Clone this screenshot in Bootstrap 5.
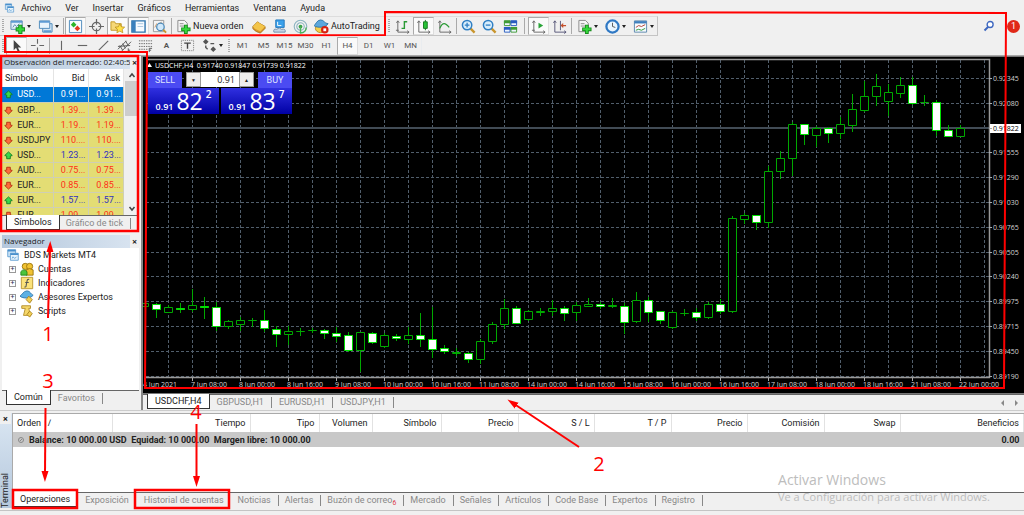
<!DOCTYPE html>
<html lang="es">
<head>
<meta charset="utf-8">
<meta name="viewport" content="width=device-width, initial-scale=1">
<title>BDS Markets MT4</title>
<link href="https://cdn.jsdelivr.net/npm/bootstrap@5.3.0/dist/css/bootstrap.min.css" rel="stylesheet">
<style>
body{font-family:Roboto,"Open Sans",sans-serif;font-size:9px;line-height:12px;background:#f0f0f0;color:#222;min-height:100vh}
button,input{font:inherit;color:inherit}
.tb,.tf,.tab,.closer{border:1px solid transparent;background:none;padding:0}
.menubar{height:16px;padding-left:4px;gap:14px}
.menubar a{color:#222;text-decoration:none}
.menubar svg{margin-right:-8px}
.bar1{height:20px}
.bar2{height:19px;color:#555}
.bars{border-bottom:1px solid #a8a8a8}
.strip{border:1px solid #c4c4c4;border-left:0;border-top-color:#ddd}
.tb{width:21px;height:18px;display:flex;align-items:center;justify-content:center;flex:none}
.tb svg{width:15px;height:15px;flex:none}
.tb.dd{width:28px;gap:2px}
.tb.wide{width:75px;gap:2px;padding:0 2px;justify-content:flex-start;white-space:nowrap}
.tf{width:21px;height:18px;font-size:8px;flex:none}
.on{background:#fafafa;border-color:#aaa #ddd #ddd #aaa}
.caret{border:2px solid transparent;border-top:3px solid #222;border-bottom:0}
.grip{width:2px;height:14px;margin:0 2px;background:repeating-linear-gradient(#aaa 0 1px,transparent 1px 2px);flex:none}
.vr1{width:1px;height:16px;margin:0 1px;background:#aaa;flex:none}
.vr1.loose{margin:0 3px}
.side{width:141px;flex:none;padding:0 2px}
.ptitle{height:13px;background:linear-gradient(90deg,#b4c7dc,#dae5f1);white-space:nowrap;padding-left:2px;font-family:"Open Sans",sans-serif;font-size:8px}
.ptitle span{overflow:hidden;flex:1}
.closer{width:9px;font-size:9px;line-height:10px;font-weight:700;background:#f0f0f0;flex:none}
.market{height:146px;overflow:hidden;background:#fff}
.quotes{table-layout:fixed;width:122px;border-collapse:collapse;flex:none}
.quotes th{height:18px;font-weight:400;padding:0 3px;border-right:1px solid #e4e4e4}
.quotes td{height:15px;padding:0 2px;background:#e3dd74;border:1px solid #cfcfb4;border-left:0;border-top:0;white-space:nowrap;line-height:12px}
.quotes .sel td{background:#0078d7;color:#fff}
.dn{color:#ff3018}.up{color:#3030c0}
.quotes svg{width:9px;height:9px;margin-right:2px}
.scroll{background:#f0f0f0;flex:1}
.scroll i{display:block;height:35px;background:#cdcdcd;margin:0 1px}
.scroll svg{width:8px;height:12px}
.tabs{height:16px;border-top:1px solid #666;white-space:nowrap}
.tab{height:11px;line-height:11px;color:#888;border:0;border-right:1px solid #888;padding:0 7px}
.tab.cur{height:15px;margin-top:-1px;background:#fff;color:#222;border:1px solid #333;border-top:0}
.tab.nob{border-right-color:transparent}
.tight .tab:not(.cur,.nob){padding-left:6px}
.tree{background:#fff;height:142px}
.tree div{height:14px;display:flex;align-items:center}
.tree svg{width:14px;height:14px;flex:none}
.leaf{padding-left:7px;gap:4px}
.leaf::before{content:"+";width:7px;height:7px;border:1px solid #999;font-size:7px;line-height:5px;text-align:center;color:#335}
.work{flex:1;min-width:0;border-left:2px solid #888}
.stage{background:#000;height:338px;border-top:1px solid #777;border-bottom:1px solid #777;overflow:hidden;font-family:"Open Sans",sans-serif}
.plot{width:100%;height:100%;display:block}
.plot text{font-size:7px;fill:#d4d4d4}
.trade{position:absolute;left:5px;top:15px;width:144px;color:#dfe2ff}
.side-name{width:34px;height:16px;background:#4b4bf2;border:0;line-height:14px;padding:0;color:#dfe2ff;font-family:Roboto,sans-serif}
.quote{flex:1;height:26px;background:linear-gradient(#3030e0,#0000a4);border:0;padding:0;display:flex;align-items:flex-end;justify-content:center;gap:3px;color:#fff;line-height:12px}
.quote b{font-size:23px;line-height:25px;font-weight:400}
.quote sup{font-size:10px;top:0;align-self:flex-start;line-height:12px;font-weight:600}
.quote span{padding-bottom:1px;font-weight:600}
.lot{height:15px;background:#fff;color:#222;flex:1;min-width:0}
.lot input{flex:1;min-width:0;border:0;padding:0 4px 0 0;text-align:right;background:#fff}
.lot button{width:15px;border:1px solid #999;background:#eee;font-size:5px;line-height:10px;padding:0}
.term{border-top:1px solid #ccc;background:#f0f0f0;padding-top:2px}
.rail{width:12px;flex:none;background:linear-gradient(#dbe7f3,#b4c7dc)}
.rail span{writing-mode:vertical-rl;transform:rotate(180deg);line-height:11px}
.rail .closer{width:11px;height:11px}
.ledger{background:#fff;height:79px;border-top:1px solid #aaa;border-left:1px solid #aaa}
.orders{table-layout:fixed;width:100%;border-collapse:collapse}
.orders th{height:18px;font-weight:400;text-align:right;padding:0 4px;border-right:1px solid #e2e2e2}
.orders td{height:15px;background:#c8c8c8;font-weight:700;padding:0 4px}
.status{height:5px;border-top:1px solid #c4c4c4;margin-top:2px}
.water{position:absolute;right:34px;bottom:11px;color:#bdbdbd;font:11px/14px "Open Sans",sans-serif;pointer-events:none}
.water div:first-child{font-size:14px;line-height:20px}
.notes{position:absolute;left:0;top:0;width:100%;height:100%;pointer-events:none}
.notes text{font:20px "Open Sans",sans-serif;fill:#f00}
.alertdot{width:13px;height:13px;background:#e02818;color:#fff;line-height:13px;text-align:center;border-radius:50%;margin-right:4px}
</style>
</head>
<body class="d-flex flex-column position-relative overflow-hidden">
<svg width="0" height="0" class="position-absolute" aria-hidden="true">
<defs>
<symbol id="i-app" viewBox="0 0 16 16"><path d="M2 2h9v8H2z" fill="#cfe6f8" stroke="#5b9bd0"/><path d="M2 3h9" stroke="#4a90cc" stroke-width="2"/><path d="M5 6h9v8H5z" fill="#e6f3fc" stroke="#5b9bd0"/><path d="M5 7h9" stroke="#4a90cc" stroke-width="2"/><path d="M7 12l1-2 2 2 2-2" fill="none" stroke="#5b9bd0"/></symbol>
<symbol id="i-plus" viewBox="0 0 16 16"><path d="M1 2h12v9H1z" fill="#e4f0fa" stroke="#5b87ad"/><path d="M1 3h12" stroke="#5d9bd3" stroke-width="2"/><path d="M3 9l2-3 2 2 3-3" stroke="#5b87ad" fill="none"/><path d="M11 6v10M6 11h10" stroke="#178a1c" stroke-width="4.500"/><path d="M11 7v8M7 11h8" stroke="#35d83c" stroke-width="2.500"/></symbol>
<symbol id="i-wins" viewBox="0 0 16 16"><path d="M5 5h10v9H5z" fill="#d2e6f5" stroke="#4d8abb"/><path d="M1.500 2h11v8h-11z" fill="#e8f4fc" stroke="#4d8abb"/><path d="M2 3h10M6 13h8" stroke="#5d9bd3" stroke-width="2"/></symbol>
<symbol id="i-mkt" viewBox="0 0 16 16"><path d="M1.500 1.500h13v13h-13z" fill="#f8fcff" stroke="#4d8abb"/><path d="M3 6l3-3 3 3-3 3z" fill="#2bb52b"/><path d="M7 10l3-3 3 3-3 3z" fill="#e23b22"/></symbol>
<symbol id="i-cross" viewBox="0 0 16 16"><g fill="none" stroke="#666" stroke-width="1.300"><circle cx="8" cy="8" r="4.500"/><path d="M8 0v6M8 10v6M0 8h6M10 8h6"/></g></symbol>
<symbol id="i-fav" viewBox="0 0 16 16"><path d="M1 3h4l1 2h6v7H1z" fill="#f6d878" stroke="#c29a2a"/><path d="M10.500 5l1.600 3.300 3.500.4-2.600 2.400.7 3.600-3.200-1.800-3.200 1.800.7-3.600L5.400 8.700l3.500-.4z" fill="#ffe04a" stroke="#b88d18" stroke-width=".8"/></symbol>
<symbol id="i-term" viewBox="0 0 16 16"><path d="M1 2h14v12H1z" fill="#f6fbff" stroke="#2d74ae" stroke-width="1.500"/><path d="M1 2h4v12H1z" fill="#3a80bd"/><path d="M7 5h6M7 8h6" stroke="#a8c6e0"/></symbol>
<symbol id="i-test" viewBox="0 0 16 16"><path d="M1.500 1.500h11v12h-11z" fill="#f4f4f4" stroke="#999"/><path d="M3 9l2-4 2 3 3-5" stroke="#c96" fill="none"/><circle cx="9" cy="8.500" r="4" fill="#cfe8fa" stroke="#4a88b8" stroke-width="1.300"/><path d="M12 11.500l3 3" stroke="#c9952d" stroke-width="2"/></symbol>
<symbol id="i-order" viewBox="0 0 16 16"><path d="M2 1.500h7l3 3v9H2z" fill="#f6f6f6" stroke="#888"/><path d="M4 5h4M4 7.500h5" stroke="#888"/><path d="M10.500 6v10M5.500 11h10" stroke="#178a1c" stroke-width="4"/><path d="M10.500 7v8M6.500 11h8" stroke="#35d83c" stroke-width="2.200"/></symbol>
<symbol id="i-gold" viewBox="0 0 16 16"><path d="M2 8l5-5c2 2 5 3 8 5v2l-5 5c-3-1-6-2-8-5z" fill="#d9982a" stroke="#a8731a"/><path d="M2 8l5-5c2 2 5 3 8 5l-5 5c-3-1-6-2-8-5z" fill="#f3c54a"/></symbol>
<symbol id="i-blue" viewBox="0 0 16 16"><path d="M4 1h9v8H4z" fill="#3aa0ea" stroke="#2378bd"/><path d="M6 3v4h4" stroke="#fff" fill="none"/><path d="M2 14q-1-4 3-3 3-3 5 0 5-1 4 3z" fill="#c5d4e4" stroke="#7390ad"/></symbol>
<symbol id="i-sig" viewBox="0 0 16 16"><g fill="none" stroke="#8cb4c0" stroke-width="1.200"><circle cx="8" cy="8" r="6.700"/><circle cx="8" cy="8" r="4"/></g><circle cx="8" cy="8" r="2" fill="#38a148"/><path d="M8 8v7c4 0 6-3 6-6" stroke="#4bb35a" stroke-width="1.500" fill="none"/></symbol>
<symbol id="i-auto" viewBox="0 0 16 16"><ellipse cx="7" cy="10" rx="5.500" ry="4.500" fill="#f3cf4b" stroke="#b78c22"/><path d="M0 7c2-1 3-6 7-6s4 4 8 4c-2 4-12 5-15 2z" fill="#5ca7dd" stroke="#2a75aa"/><circle cx="11.500" cy="11.500" r="4" fill="#d9200f"/><path d="M10 10h3v3h-3z" fill="#fff"/></symbol>
<symbol id="i-bars" viewBox="0 0 16 16"><path d="M3 2v12h12M1 12h3M3 2l-1.500 2M3 2l1.500 2M13 12.500l2 1.500-2 1.500" fill="none" stroke="#666"/><path d="M7 10h3V3h3" fill="none" stroke="#2a9a35" stroke-width="1.500"/></symbol>
<symbol id="i-cndl" viewBox="0 0 16 16"><path d="M3 2v12h12M3 2l-1.500 2M3 2l1.500 2M13 12.500l2 1.500-2 1.500" fill="none" stroke="#666"/><path d="M10 1v11" stroke="#187a20"/><path d="M8 3h4v7H8z" fill="#28c437" stroke="#187a20"/></symbol>
<symbol id="i-line" viewBox="0 0 16 16"><path d="M3 2v12h12M3 2l-1.500 2M3 2l1.500 2M13 12.500l2 1.500-2 1.500" fill="none" stroke="#666"/><path d="M3 10c3-7 6-6 10-1" fill="none" stroke="#2a9a35" stroke-width="1.300"/></symbol>
<symbol id="i-zin" viewBox="0 0 16 16"><path d="M9.500 9.500l5 5" stroke="#c9952d" stroke-width="2.500"/><circle cx="6.500" cy="6.500" r="5" fill="#d8eefc" stroke="#2f7fc4" stroke-width="1.600"/><path d="M4 6.500h5M6.500 4v5" stroke="#2f7fc4" stroke-width="1.400"/></symbol>
<symbol id="i-zout" viewBox="0 0 16 16"><path d="M9.500 9.500l5 5" stroke="#c9952d" stroke-width="2.500"/><circle cx="6.500" cy="6.500" r="5" fill="#d8eefc" stroke="#2f7fc4" stroke-width="1.600"/><path d="M4 6.500h5" stroke="#2f7fc4" stroke-width="1.400"/></symbol>
<symbol id="i-tile" viewBox="0 0 16 16"><g fill="#eef6ff"><path d="M1.500 2h6v5h-6z" stroke="#3f9a35"/><path d="M8.500 2h6v5h-6z" stroke="#2a5cc0"/><path d="M1.500 9h6v5h-6z" stroke="#2a5cc0"/><path d="M8.500 9h6v5h-6z" stroke="#3f9a35"/></g><path d="M1 3h7M8 10h7" stroke="#3f9a35" stroke-width="3"/><path d="M8 3h7M1 10h7" stroke="#2a5cc0" stroke-width="3"/></symbol>
<symbol id="i-scr" viewBox="0 0 16 16"><path d="M3 2v12h12M1 12h3M3 2l-1.500 2M3 2l1.500 2M13 12.500l2 1.500-2 1.500" fill="none" stroke="#666"/><path d="M8 4l5 3-5 3z" fill="#28a437"/></symbol>
<symbol id="i-shift" viewBox="0 0 16 16"><path d="M3 2v12h12M3 2l-1.500 2M3 2l1.500 2M13 12.500l2 1.500-2 1.500M9 2v10" fill="none" stroke="#557"/><path d="M15 7h-5M12 5l-2 2 2 2" stroke="#c4502c" fill="none" stroke-width="1.300"/></symbol>
<symbol id="i-clock" viewBox="0 0 16 16"><circle cx="8" cy="8" r="6.500" fill="#e9f5ff" stroke="#2f78c4" stroke-width="2.400"/><path d="M8 4v4l3 1" fill="none" stroke="#555"/></symbol>
<symbol id="i-tmpl" viewBox="0 0 16 16"><path d="M1.500 2h13v12h-13z" fill="#f8fbff" stroke="#5b87ad"/><path d="M1.500 3.500h13" stroke="#3f7fbd" stroke-width="2.500"/><path d="M3 9l3-2 3 1 4-2" stroke="#b04030" fill="none"/><path d="M3 12l3-1 3 1 4-2" stroke="#2a9a35" fill="none"/></symbol>
<symbol id="i-arrow" viewBox="0 0 16 16"><path d="M5 2v11l2.500-2.500 2 4.500 2-1-2-4H13z" fill="#444"/></symbol>
<symbol id="i-ch" viewBox="0 0 16 16"><path d="M8 1v5M8 10v5M1 8h5M10 8h5" stroke="#666" stroke-width="1.200"/></symbol>
<symbol id="i-v" viewBox="0 0 16 16"><path d="M8 3v10" stroke="#666" stroke-width="1.200"/></symbol>
<symbol id="i-h" viewBox="0 0 16 16"><path d="M3 8h10" stroke="#666" stroke-width="1.200"/></symbol>
<symbol id="i-d" viewBox="0 0 16 16"><path d="M3 13L13 3" stroke="#666" stroke-width="1.200"/></symbol>
<symbol id="i-chan" viewBox="0 0 16 16"><path d="M1 12l9-9M5 14l10-10M3 8l3 5M6 6l3 5M9 3l3 5M1 9l13-1" stroke="#555" fill="none"/><path d="M12 11v4h3M12 13h2" stroke="#555" fill="none"/></symbol>
<symbol id="i-fib" viewBox="0 0 16 16"><path d="M1 3h14M1 6h14M1 9h14M1 12h9" stroke="#666" stroke-dasharray="1.500 1"/><path d="M12 15v-4h3M12 13h2" stroke="#555" fill="none"/></symbol>
<symbol id="i-lab" viewBox="0 0 16 16"><path d="M1.500 2.500h13v11h-13z" fill="none" stroke="#777" stroke-dasharray="1 1"/><path d="M4.500 5.500h7M8 5.500v6" stroke="#444" stroke-width="1.500"/></symbol>
<symbol id="i-shapes" viewBox="0 0 16 16"><path d="M4 1l3 3-3 3-3-3zM12 9l3 3-3 3-3-3z" fill="#555"/><path d="M4 8v2l2 2M9 6h4" stroke="#555" stroke-width="1.500" fill="none"/></symbol>
<symbol id="i-up" viewBox="0 0 10 10"><path d="M5 1L9.200 5 7 5.600V8.600H3V5.600L.8 5z" fill="#38d84a" stroke="#137a22"/></symbol>
<symbol id="i-dn" viewBox="0 0 10 10"><path d="M5 9L.8 5 3 4.400V1.400H7V4.400L9.200 5z" fill="#ff6a38" stroke="#b02c10"/></symbol>
<symbol id="i-acc" viewBox="0 0 16 16"><circle cx="6" cy="5" r="3.500" fill="#f1c232" stroke="#98720a"/><circle cx="11" cy="5" r="3.500" fill="#f1c232" stroke="#98720a"/><path d="M7 15V9q4-3 8 0v6z" fill="#f1c232" stroke="#98720a"/><path d="M1 15v-4q3-4 7 0v4z" fill="#4cc43c" stroke="#24861a"/></symbol>
<symbol id="i-ind" viewBox="0 0 16 16"><path d="M1.500 1.500h13v13h-13z" fill="#fbe27a" stroke="#b8922a"/><path d="M10.500 4q-2-1-2.500 2L7 11q0 2-2 1.500M6 7.500h4" fill="none" stroke="#555" stroke-width="1.200"/></symbol>
<symbol id="i-exp" viewBox="0 0 16 16"><path d="M0 7c2-1 4-6 8-6s4 4 7 5c-3 4-12 4-15 1z" fill="#5cb0e4" stroke="#2a75aa"/><path d="M10 7l4 4-3 4-4-4z" fill="#f1cf56" stroke="#a8801c"/></symbol>
<symbol id="i-scp" viewBox="0 0 16 16"><path d="M2 2h10v3h-2l2 8H4L6 5H2z" fill="#f5d76a" stroke="#b08a26"/><path d="M11 8l3 3-3 4-3-3z" fill="#f1cf56" stroke="#a8801c"/></symbol>
</defs></svg>

<nav class="menubar d-flex align-items-center" aria-label="Menú">
<svg width="11" height="12" aria-hidden="true"><use href="#i-app"/></svg>
<a href="#">Archivo</a><a href="#">Ver</a><a href="#">Insertar</a><a href="#">Gráficos</a><a href="#">Herramientas</a><a href="#">Ventana</a><a href="#">Ayuda</a>
</nav>

<header class="bars">
<div class="bar1 d-flex align-items-center">
<div class="strip d-flex align-items-center" id="bar1"></div>
<div class="ms-auto d-flex align-items-center gap-2">
<svg width="12" height="12" viewBox="0 0 16 16" aria-label="Buscar"><path d="M7 9l-5 5" stroke="#3d67c0" stroke-width="2.500"/><circle cx="9.500" cy="6" r="4" fill="#fff" stroke="#3d67c0" stroke-width="1.800"/></svg>
<span class="alertdot ms-1">1</span></div>
</div>
<div class="bar2 d-flex align-items-center"><div class="d-flex align-items-center border-end border-secondary-subtle" id="bar2"></div></div>
</header>

<main class="d-flex">
<aside class="side">
<section>
<div class="ptitle d-flex"><span>Observación del mercado: 02:40:5</span><button class="closer" aria-label="Cerrar">×</button></div>
<div class="market d-flex">
<table class="quotes"><colgroup><col style="width:51px"><col style="width:35px"><col></colgroup>
<thead><tr><th>Símbolo</th><th class="text-end">Bid</th><th class="text-end">Ask</th></tr></thead><tbody id="quotes"></tbody></table>
<div class="scroll d-flex flex-column" aria-hidden="true"><svg class="mx-auto" viewBox="0 0 8 12"><path d="M1.500 8L4 5l2.500 3" fill="none" stroke="#444" stroke-width="1.500"/></svg><i></i><svg class="mx-auto mt-auto" viewBox="0 0 8 12"><path d="M1.500 4L4 7l2.500-3" fill="none" stroke="#444" stroke-width="1.500"/></svg></div>
</div>
<div class="tabs tight d-flex align-items-center ps-1"><button class="tab cur align-self-start">Símbolos</button><button class="tab">Gráfico de tick</button></div>
</section>
<section class="pt-1">
<div class="ptitle d-flex"><span>Navegador</span><button class="closer" aria-label="Cerrar">×</button></div>
<div class="tree">
<div class="ps-1 gap-1"><svg><use href="#i-app"/></svg>BDS Markets MT4</div>
<div class="leaf"><svg><use href="#i-acc"/></svg>Cuentas</div>
<div class="leaf"><svg><use href="#i-ind"/></svg>Indicadores</div>
<div class="leaf"><svg><use href="#i-exp"/></svg>Asesores Expertos</div>
<div class="leaf"><svg><use href="#i-scp"/></svg>Scripts</div>
</div>
<div class="tabs d-flex align-items-center ps-1"><button class="tab cur align-self-start">Común</button><button class="tab">Favoritos</button></div>
</section>
</aside>

<section class="work">
<div class="stage position-relative">
<svg class="plot" id="plot" viewBox="143 57 881 336" preserveAspectRatio="xMinYMin meet" role="img" aria-label="USDCHF,H4"></svg>
<div class="trade">
<div class="d-flex gap-1 justify-content-between"><button class="side-name">SELL</button>
<div class="lot d-flex"><button aria-label="Menos">▼</button><input aria-label="Volumen" value="0.91"><button aria-label="Más">▲</button></div>
<button class="side-name">BUY</button></div>
<div class="d-flex" style="gap:2px"><button class="quote"><span>0.91</span><b>82</b><sup>2</sup></button><button class="quote"><span>0.91</span><b>83</b><sup>7</sup></button></div>
</div>
</div>
<div class="tabs d-flex align-items-center ps-1"><button class="tab cur align-self-start">USDCHF,H4</button><button class="tab">GBPUSD,H1</button><button class="tab">EURUSD,H1</button><button class="tab">USDJPY,H1</button>
<svg class="ms-auto me-1" width="20" height="8" aria-hidden="true"><path d="M4 1v6L1 4zM15 1v6l3-3z" fill="#888"/></svg></div>
</section>
</main>

<footer class="term">
<div class="d-flex">
<div class="rail d-flex flex-column justify-content-between"><button class="closer" aria-label="Cerrar">×</button><span>Terminal</span></div>
<div class="flex-grow-1">
<div class="ledger"><table class="orders">
<colgroup><col style="width:99px"><col style="width:138px"><col style="width:69px"><col style="width:53px"><col style="width:69px"><col style="width:77px"><col style="width:76px"><col style="width:77px"><col style="width:76px"><col style="width:77px"><col style="width:76px"><col></colgroup>
<thead><tr><th class="text-start">Orden &nbsp; ∕</th><th>Tiempo</th><th>Tipo</th><th>Volumen</th><th>Símbolo</th><th>Precio</th><th>S / L</th><th>T / P</th><th>Precio</th><th>Comisión</th><th>Swap</th><th>Beneficios</th></tr></thead>
<tbody><tr><td colspan="11"><svg width="8" height="8" viewBox="0 0 8 8" class="me-1" aria-hidden="true"><circle cx="4" cy="4" r="2.500" fill="none" stroke="#888"/><path d="M3 5l2-2" stroke="#888"/></svg>Balance: 10 000.00 USD&nbsp; Equidad: 10 000.00&nbsp; Margen libre: 10 000.00</td><td class="text-end">0.00</td></tr></tbody></table></div>
<div class="tabs tight d-flex align-items-center"><button class="tab cur align-self-start">Operaciones</button><button class="tab nob">Exposición</button><button class="tab nob">Historial de cuentas</button><button class="tab">Noticias</button><button class="tab">Alertas</button><button class="tab">Buzón de correo<sub class="text-danger">6</sub></button><button class="tab">Mercado</button><button class="tab">Señales</button><button class="tab">Artículos</button><button class="tab">Code Base</button><button class="tab">Expertos</button><button class="tab">Registro</button></div>
</div>
</div>
<div class="status"></div>
</footer>

<div class="water"><div>Activar Windows</div><div>Ve a Configuración para activar Windows.</div></div>

<svg class="notes" viewBox="0 0 1024 515" preserveAspectRatio="xMinYMin meet">
<defs><marker id="tip" markerUnits="userSpaceOnUse" markerWidth="12" markerHeight="8" refX="2" refY="4" orient="auto"><path d="M0 .5L11 4 0 7.500z" fill="#f00"/></marker></defs>
<g fill="none" stroke="#f00" stroke-width="2">
<path d="M1 56h137v175H1zM13 490h64v18H13zM135 490h94v18h-94z" stroke-width="2.500"/>
<path d="M5 36L385 35V12L1006 13L1004 388H145L147 52H5z"/>
<path d="M48 318L50 250" marker-end="url(#tip)"/><path d="M579 447L515 404.500" marker-end="url(#tip)"/><path d="M45.500 408L45 473" marker-end="url(#tip)"/><path d="M196.500 424V478" marker-end="url(#tip)"/>
</g>
<g text-anchor="middle"><text x="48" y="341">1</text><text x="599" y="471">2</text><text x="48" y="388">3</text><text x="196" y="419">4</text></g>
</svg>

<script>
// Toolbars: [icon, label, flags] where flags are d (drop-down), o (pressed), w (with text)
const bar = (id, items) => document.getElementById(id).innerHTML = items.map(i => {
  if (i === 'g') return '<span class="grip"></span>';
  if (i === '|') return '<span class="vr1"></span>';
  if (i === '||') return '<span class="vr1 loose"></span>';
  const [icon, label, f = ''] = i;
  const on = f.includes('o') ? ' on' : '';
  if (!icon) return `<button class="tf${on}">${label}</button>`;
  return `<button class="tb${on}${f.includes('d') ? ' dd' : ''}${f.includes('w') ? ' wide' : ''}" aria-label="${label}"><svg><use href="#i-${icon}"/></svg>${f.includes('w') ? label : ''}${f.includes('d') ? '<span class="caret"></span>' : ''}</button>`;
}).join('');
bar('bar1', ['g',['plus','Nuevo gráfico','d'],['wins','Perfiles','d'],'|',['mkt','Mercado','o'],['cross','Datos'],['fav','Navegador','o'],['term','Terminal','o'],['test','Probador'],'|',
 ['order','Nueva orden','w'],['gold','MetaEditor'],['blue','VPS'],['sig','Señales'],['auto','AutoTrading','w'],'g',['bars','Barras'],['cndl','Velas','o'],['line','Línea'],'|',
 ['zin','Acercar'],['zout','Alejar'],['tile','Mosaico'],'||',['scr','Desplazar','o'],['shift','Margen'],'|',['order','Indicadores','d'],['clock','Períodos','d'],['tmpl','Plantillas','d']]);
bar('bar2', ['g',['arrow','Cursor','o'],['ch','Cruz'],'|',['v','Vertical'],['h','Horizontal'],['d','Tendencia'],['chan','Canal'],['fib','Fibonacci'],['','<b>A</b>'],['lab','Etiqueta'],['shapes','Flechas','d'],'g',
 ...['M1','M5','M15','M30','H1','H4','D1','W1','MN'].map(t => ['', t, t === 'H4' ? 'o' : ''])]);

document.getElementById('quotes').innerHTML = [['USD...','0.91...','u'],['GBP...','1.39...','d'],['EUR...','1.19...','d'],['USDJPY','110....','d'],['USD...','1.23...','u'],['AUD...','0.75...','d'],['EUR...','0.85...','d'],['EUR...','1.57...','u'],['EUR...','1.09...','d']]
 .map(([s, p, d], i) => { const c = i ? (d === 'u' ? 'up' : 'dn') : ''; return `<tr class="${i ? '' : 'sel'}"><td><svg><use href="#i-${d === 'u' ? 'up' : 'dn'}"/></svg> ${s}</td><td class="text-end ${c}">${p}</td><td class="text-end ${c}">${p}</td></tr>`; }).join('');

// Candles, one every 12 units: high, body top, body bottom, low, 1 when bearish
const C = [[303,303,306,306,0],[303,304,309,317,1],[305,307,312,312,0],[303,308,309,312,1],[289,305,309,311,0],[297,306,307,318,1],[302,307,326,330,1],[320,321,326,328,0],[317,320,324,330,0],[318,320,320,326,0],[310,320,328,331,1],[326,329,334,346,1],[326,331,334,344,0],[328,331,331,335,0],[328,330,330,332,0],[329,330,333,338,1],[327,333,336,341,1],[332,335,350,351,1],[332,332,350,371,0],[332,333,342,343,1],[333,335,346,347,0],[334,336,338,340,1],[327,335,339,343,0],[313,335,339,346,1],[307,339,349,357,1],[345,348,351,353,1],[348,352,353,355,0],[352,353,359,362,1],[339,341,359,363,0],[322,324,341,343,0],[299,308,324,328,0],[306,308,323,323,1],[310,311,319,320,0],[308,311,312,315,0],[300,308,311,315,0],[306,308,313,320,1],[302,305,312,320,0],[298,304,306,306,0],[302,304,306,308,1],[298,305,306,307,0],[303,306,322,333,1],[292,300,321,322,0],[297,300,312,321,1],[311,311,320,323,1],[311,312,327,328,0],[309,313,313,315,0],[308,312,317,320,1],[302,304,317,318,0],[299,304,311,313,1],[216,218,311,312,0],[213,215,219,223,0],[215,215,222,229,1],[166,171,222,227,0],[151,158,171,178,0],[122,124,158,175,0],[124,124,134,144,1],[126,128,135,146,0],[127,128,133,142,1],[117,124,133,138,0],[94,109,125,131,0],[81,96,110,111,0],[74,86,96,105,0],[84,92,101,115,0],[77,85,93,97,0],[77,85,103,104,1],[95,102,102,105,0],[100,102,130,135,1],[125,130,136,136,1],[125,128,136,136,0]];
let s = '<g stroke="#515e6b" stroke-dasharray="3 2">';
for (let x = 168.5; x < 989; x += 24) s += `<path d="M${x} 60V377"/>`;
const prices = ['0.92345','0.92080','0.91822','0.91555','0.91290','0.91030','0.90765','0.90505','0.90240','0.89975','0.89715','0.89450','0.89190'];
const py = i => Math.round(78 + i * 24.8) + .5;
prices.forEach((p, i) => { if (i !== 2) s += `<path d="M146 ${py(i)}H989"/>`; });
s += '</g><path d="M146 128H989" stroke="#414b55" stroke-width="2"/><path d="M148 59.500H989.500V377.500H146" fill="none" stroke="#999" stroke-width="1.500"/>';
prices.forEach((p, i) => {
  if (i === 2) s += '<path d="M990 124h31v9h-31z" fill="#fff"/>';
  s += `<path d="M989 ${py(i)}h3" stroke="#aaa"/><text x="993" y="${py(i) + 2.5}"${i === 2 ? ' style="fill:#000"' : ''}>${p}</text>`;
});
C.forEach(([h, t, b, l, w], k) => {
  const x = 144.5 + 12 * k, y = n => n + .5;
  s += `<path d="M${x} ${h}V${t}M${x} ${b}V${l + 1}" stroke="#00a800"/><path d="M${x - 4} ${y(t)}H${x + 4}V${y(b)}H${x - 4}z" fill="${w ? '#fff' : '#000'}" stroke="${w ? '#00e000' : '#00a800'}"/>`;
});
['4 Jun 2021','7 Jun 08:00','8 Jun 00:00','8 Jun 16:00','9 Jun 08:00','10 Jun 00:00','10 Jun 16:00','11 Jun 08:00','14 Jun 00:00','14 Jun 16:00','15 Jun 08:00','16 Jun 00:00','16 Jun 16:00','17 Jun 08:00','18 Jun 00:00','18 Jun 16:00','21 Jun 08:00','22 Jun 00:00']
 .forEach((t, i) => { s += `<path d="M${144.5 + 48 * i} 378v3" stroke="#aaa"/><text x="${143 + 48 * i}" y="387">${t}</text>`; });
s += '<path d="M147 67l2.500-4 2.500 4z" fill="#fff"/><text x="155" y="68" style="fill:#fff">USDCHF,H4&#160; 0.91740 0.91847 0.91739 0.91822</text>';
document.getElementById('plot').innerHTML = s;
</script>
<script src="https://cdn.jsdelivr.net/npm/bootstrap@5.3.0/dist/js/bootstrap.bundle.min.js"></script>
</body>
</html>
